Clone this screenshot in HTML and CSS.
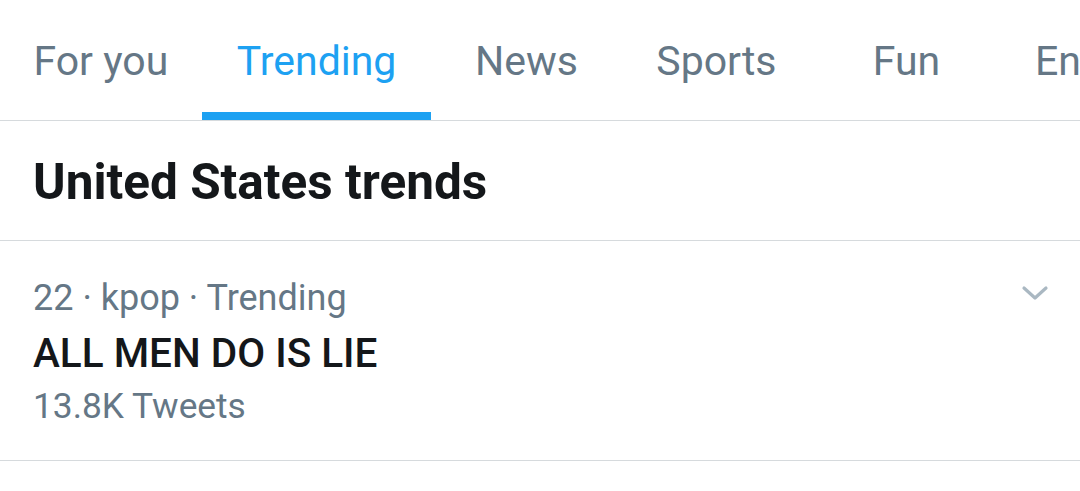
FILE: index.html
```html
<!DOCTYPE html>
<html>
<head>
<meta charset="utf-8">
<link rel="stylesheet" href="styles.css">
</head>
<body>
<nav class="tabs">
  <div class="tab">For you</div>
  <div class="tab active">Trending</div>
  <div class="tab">News</div>
  <div class="tab">Sports</div>
  <div class="tab">Fun</div>
  <div class="tab">Entertainment</div>
</nav>
<section class="heading">
  <h1>United States trends</h1>
</section>
<article class="trend">
  <div class="trend-body">
    <div class="meta">22 · kpop · Trending</div>
    <div class="title">ALL MEN DO IS LIE</div>
    <div class="count">13.8K Tweets</div>
  </div>
  <svg class="chevron" width="28" height="16" viewBox="0 0 28 16">
    <path d="M3 3 L14 13 L25 3" fill="none" stroke="#aab8c2" stroke-width="3.2" stroke-linecap="round" stroke-linejoin="round"/>
  </svg>
</article>
</body>
</html>
```
FILE: styles.css
```css
html, body {
  margin: 0;
  padding: 0;
  background: #ffffff;
  width: 1080px;
  height: 491px;
  overflow: hidden;
  font-family: Roboto, "Noto Sans", sans-serif;
}
.tabs {
  display: flex;
  height: 120px;
  border-bottom: 1px solid #d6dadd;
  overflow: hidden;
  white-space: nowrap;
}
.tab {
  flex: none;
  min-width: 190px;
  padding: 2px 33.5px 0;
  box-sizing: border-box;
  display: flex;
  align-items: center;
  justify-content: center;
  font-size: 41px;
  color: #657786;
  position: relative;
}
.tab.active {
  color: #1da1f2;
  padding: 2px 35px 0;
}
.tab.active::after {
  content: "";
  position: absolute;
  left: 0;
  right: 0;
  bottom: 0;
  height: 8px;
  background: #1da1f2;
}
.heading {
  height: 119px;
  border-bottom: 1px solid #d6dadd;
  display: flex;
  align-items: center;
  padding: 0 33px;
}
.heading h1 {
  margin: 0;
  font-size: 49.5px;
  font-weight: 700;
  color: #14171a;
  padding-top: 2px;
}
.trend {
  height: 219px;
  border-bottom: 1px solid #d6dadd;
  display: flex;
  justify-content: space-between;
  padding: 0 31px 0 33px;
}
.trend-body {
  padding-top: 30px;
}
.meta {
  font-size: 36px;
  color: #657786;
  line-height: 54px;
}
.title {
  font-size: 40.5px;
  font-weight: 500;
  color: #14171a;
  line-height: 56px;
}
.count {
  font-size: 35.3px;
  color: #657786;
  line-height: 50px;
}
.chevron {
  margin-top: 44px;
}
```
